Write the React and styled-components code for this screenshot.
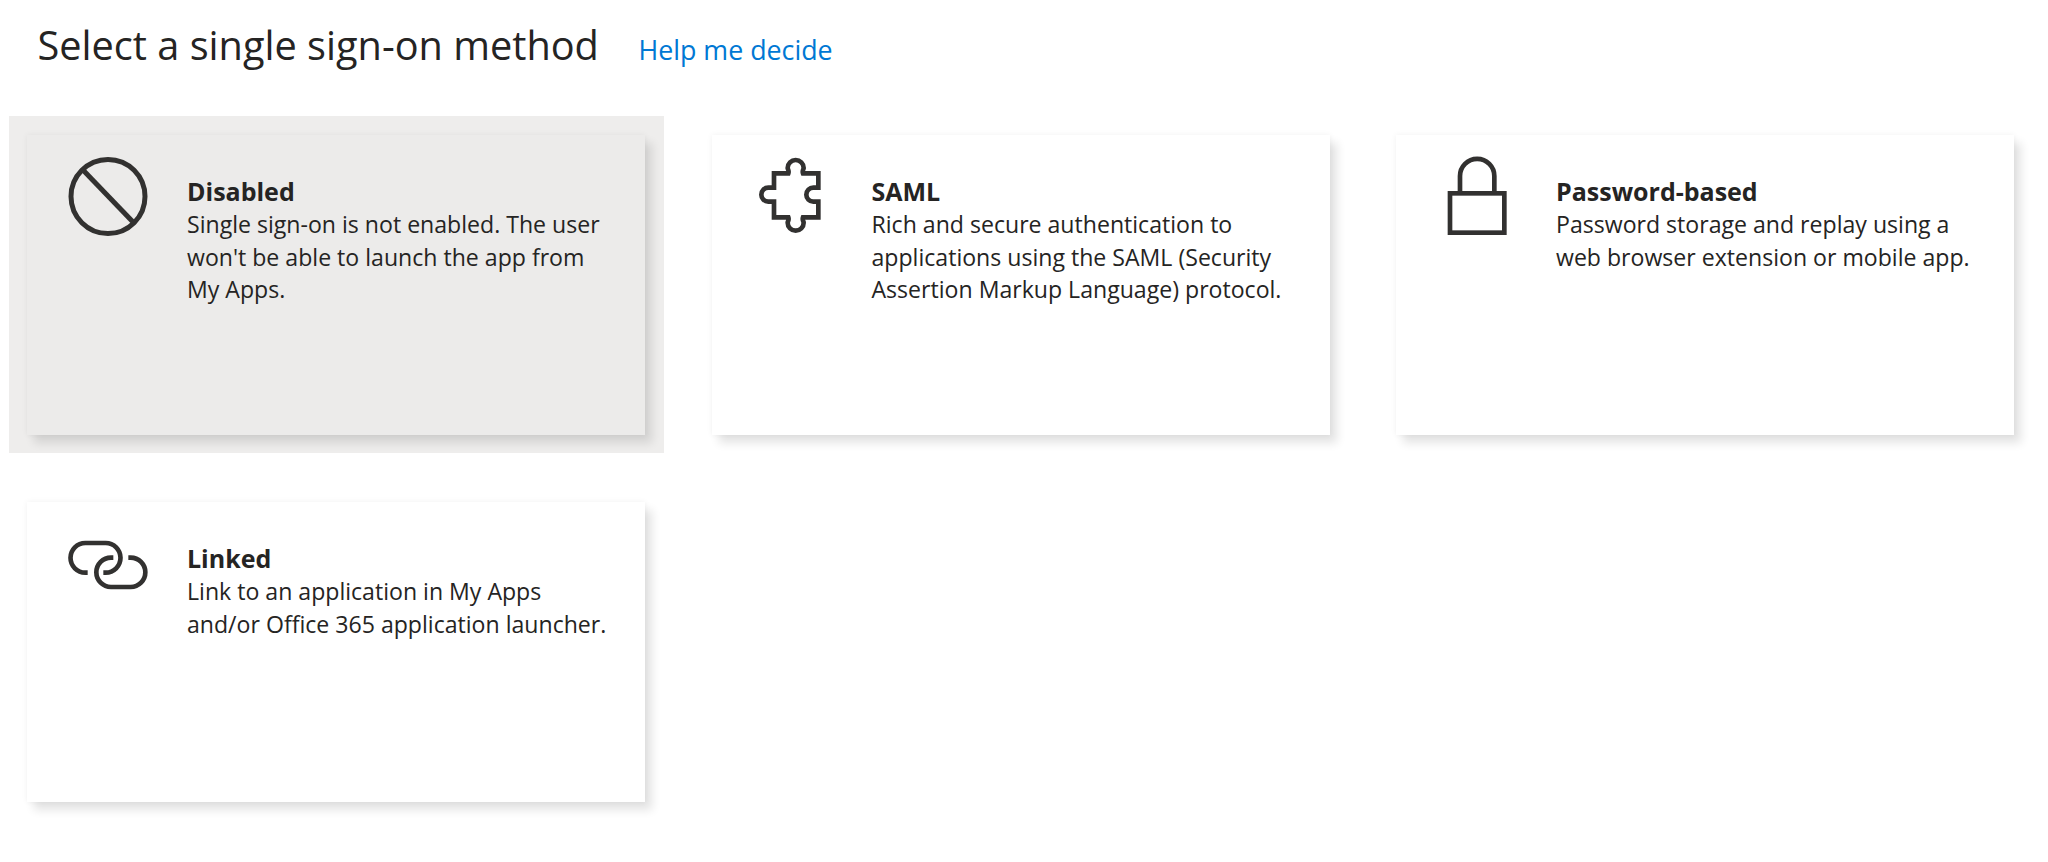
import styled, { createGlobalStyle } from 'styled-components';

const GlobalStyle = createGlobalStyle`
  html, body {
    margin: 0;
    padding: 0;
    background: #fff;
  }
  body {
    font-family: 'Open Sans', 'Noto Sans', 'Liberation Sans', sans-serif;
    color: #252423;
  }
`
const Page = styled.div`
  width: 2048px;
  height: 862px;
  overflow: hidden;
  box-sizing: border-box;
  padding: 15px 0 0 9px;
`
const Header = styled.div`
  display: flex;
  align-items: baseline;
  gap: 39.5px;
  padding-left: 28.5px;
  margin-bottom: 41px;
`
const Title = styled.h1`
  margin: 0;
  font-size: 39.7px;
  line-height: 60px;
  font-weight: 400;
  color: #252423;
`
const HelpLink = styled.a`
  font-size: 26.8px;
  color: #0078d4;
  text-decoration: none;
  cursor: pointer;
`
const Grid = styled.div`
  display: grid;
  grid-template-columns: repeat(3, 655px);
  column-gap: 29.5px;
  row-gap: 30px;
  align-items: start;
`
const Tile = styled.div`
  padding: 19px 19px 18px 18px;
  background: ${props => props.$selected ? '#eeedec' : 'transparent'};
`
const Card = styled.div`
  display: flex;
  box-sizing: border-box;
  height: 300px;
  padding: 21px 32px 0 41px;
  background: ${props => props.$selected ? '#ecebea' : '#fff'};
  box-shadow: 7px 8px 9px rgba(0, 0, 0, 0.11), 0 0 6px rgba(0, 0, 0, 0.06);
`
const IconBox = styled.div`
  flex: 0 0 80px;
  width: 80px;
  height: 80px;
  margin-right: 39px;
  svg {
    display: block;
    fill: none;
    stroke: #323130;
  }
`
const Body = styled.div`
  padding-top: 19px;
  flex: 1;
`
const CardTitle = styled.div`
  font-size: 25px;
  line-height: 33px;
  font-weight: 700;
  color: #252423;
`
const CardText = styled.div`
  font-size: 23.1px;
  line-height: 32.7px;
  color: #252423;
`

const DisabledIcon = () => (
  <svg width="80" height="80" viewBox="0 0 80 80" strokeWidth="5">
    <circle cx="40" cy="40.5" r="37" />
    <path d="M15 14 L65 66" />
  </svg>
)

const PuzzleIcon = () => (
  <svg width="80" height="80" viewBox="39 48 240 240" strokeWidth="14">
    <path d="M102 100 H145 C148 92 143 88 143 84 A24 24 0 0 1 191 84 C191 88 186 92 189 100 H235 V143 H220 A21 21 0 0 0 220 185 H235 V232 H189 C186 240 191 244 191 248 A24 24 0 0 1 143 248 C143 244 148 240 145 232 H102 V185 H85 A21 21 0 0 1 85 143 H102 Z" />
  </svg>
)

const LockIcon = () => (
  <svg width="80" height="80" viewBox="21 48 240 240" strokeWidth="14">
    <rect x="60" y="160" width="163" height="118" />
    <path d="M90 160 V108 A51.5 51.5 0 0 1 193 108 V160" />
  </svg>
)

const LinkIcon = () => (
  <svg width="80" height="80" viewBox="54 6 240 240" strokeWidth="14">
    <path d="M113 155 H106 A44.5 44.5 0 0 1 106 66 H167 A44.5 44.5 0 0 1 167 155 H160" />
    <path d="M190 110 H183 A44 44 0 0 0 183 198 H242 A44 44 0 0 0 242 110 H235" />
  </svg>
)

const methods = [
  { name: 'Disabled', text: "Single sign-on is not enabled. The user won't be able to launch the app from My Apps.", icon: <DisabledIcon />, selected: true },
  { name: 'SAML', text: 'Rich and secure authentication to applications using the SAML (Security Assertion Markup Language) protocol.', icon: <PuzzleIcon /> },
  { name: 'Password-based', text: 'Password storage and replay using a web browser extension or mobile app.', icon: <LockIcon /> },
  { name: 'Linked', text: 'Link to an application in My Apps and/or Office 365 application launcher.', icon: <LinkIcon /> },
]

const App = () => {
  return (
    <Page>
      <GlobalStyle />
      <Header>
        <Title>Select a single sign-on method</Title>
        <HelpLink>Help me decide</HelpLink>
      </Header>
      <Grid>
        {methods.map(method => (
          <Tile key={method.name} $selected={method.selected}>
            <Card $selected={method.selected}>
              <IconBox>{method.icon}</IconBox>
              <Body>
                <CardTitle>{method.name}</CardTitle>
                <CardText>{method.text}</CardText>
              </Body>
            </Card>
          </Tile>
        ))}
      </Grid>
    </Page>
  )
}

export default App
